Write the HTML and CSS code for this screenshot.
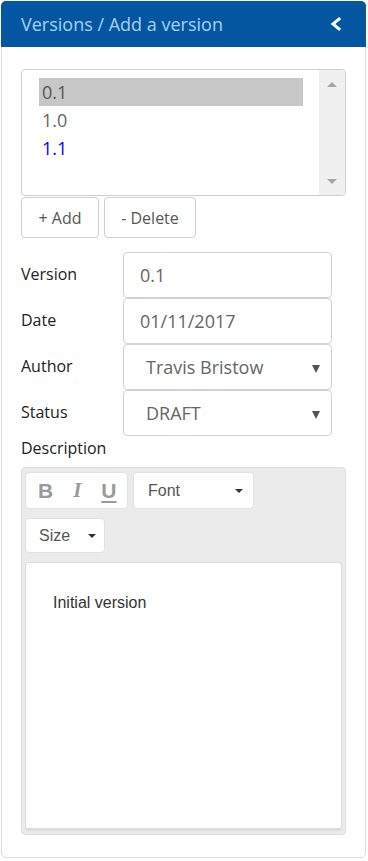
FILE: index.html
```html
<!DOCTYPE html>
<html lang="en">
<head>
    <meta charset="UTF-8">
    <meta name="viewport" content="width=device-width, initial-scale=1.0">
    <title>Versions / Add a version</title>
    <link rel="stylesheet" href="styles.css">
</head>
<body>
    <div class="panel">
        <div class="panel-header">
            <span class="panel-title">Versions / Add a version</span>
            <svg class="back-icon" width="12" height="14" viewBox="0 0 12 14">
                <polyline points="9,2 3,7 9,12" fill="none" stroke="#fff" stroke-width="3" stroke-linecap="square"/>
            </svg>
        </div>

        <div class="panel-body">
            <!-- version list -->
            <div class="version-list">
                <ul class="items">
                    <li class="item selected">0.1</li>
                    <li class="item">1.0</li>
                    <li class="item current">1.1</li>
                </ul>
                <div class="scrollbar">
                    <span class="arrow up"></span>
                    <span class="arrow down"></span>
                </div>
            </div>

            <div class="list-actions">
                <button class="btn btn-add">+ Add</button>
                <button class="btn btn-delete">- Delete</button>
            </div>

            <!-- version form -->
            <div class="form">
                <label>Version</label>
                <div class="field">0.1</div>
                <label>Date</label>
                <div class="field">01/11/2017</div>
                <label>Author</label>
                <div class="field select">Travis Bristow<span class="select-arrow"></span></div>
                <label>Status</label>
                <div class="field select">DRAFT<span class="select-arrow"></span></div>
            </div>

            <div class="desc-label">Description</div>

            <div class="editor">
                <div class="toolbar">
                    <div class="toolbar-row">
                        <div class="tool-group">
                            <span class="tool bold">B</span>
                            <span class="tool italic">I</span>
                            <span class="tool underline">U</span>
                        </div>
                        <div class="dropdown dd-font">Font<span class="caret"></span></div>
                    </div>
                    <div class="toolbar-row">
                        <div class="dropdown dd-size">Size<span class="caret"></span></div>
                    </div>
                </div>
                <div class="editor-content">
                    <p>Initial version</p>
                </div>
            </div>
        </div>
    </div>
</body>
</html>
```

FILE: styles.css
```css
* {
    margin: 0;
    padding: 0;
    box-sizing: border-box;
}
body {
    background: #fff;
    font-family: "Open Sans", sans-serif;
    color: #333;
}
.panel {
    margin: 1px 0 0 1px;
    width: 365px;
    height: 857px;
    border: 1px solid #dcdcdc;
    border-radius: 5px;
    display: flex;
    flex-direction: column;
}
.panel-header {
    height: 46px;
    margin: -1px -1px 0 -1px;
    background: #03569f;
    border-radius: 5px 5px 0 0;
    display: flex;
    align-items: center;
    justify-content: space-between;
    padding: 0 24px 0 20px;
}
.panel-title {
    color: #a3d2f8;
    font-size: 18px;
}
.panel-body {
    padding: 22px 19px 0 19px;
    flex: 1;
    display: flex;
    flex-direction: column;
}
.version-list {
    height: 127px;
    border: 1px solid #cfcfcf;
    border-radius: 4px;
    display: flex;
    overflow: hidden;
}
.items {
    list-style: none;
    flex: 1;
    padding: 8px 16px 0 17px;
}
.item {
    height: 28px;
    line-height: 28px;
    padding-left: 3px;
    font-size: 18px;
    color: #666;
}
.item.selected {
    background: #c7c7c7;
    color: #555;
}
.item.current {
    color: #0a00f0;
}
.scrollbar {
    width: 26px;
    background: #f0f0f0;
    display: flex;
    flex-direction: column;
    justify-content: space-between;
    align-items: center;
    padding: 12px 0 11px;
}
.arrow {
    width: 0;
    height: 0;
    border-left: 5px solid transparent;
    border-right: 5px solid transparent;
}
.arrow.up {
    border-bottom: 5px solid #a5a5a5;
}
.arrow.down {
    border-top: 5px solid #a5a5a5;
}
.list-actions {
    display: flex;
    gap: 5px;
    margin-top: 1px;
}
.btn {
    height: 41px;
    background: #fff;
    border: 1px solid #cfcfcf;
    border-radius: 4px;
    font-family: "Open Sans", sans-serif;
    font-size: 16px;
    color: #555;
}
.btn-add {
    width: 78px;
}
.btn-delete {
    width: 92px;
}
.form {
    margin-top: 14px;
    display: grid;
    grid-template-columns: 102px 209px;
    grid-auto-rows: 46px;
}
.form label {
    font-size: 16px;
    color: #222;
    display: flex;
    align-items: center;
    padding-bottom: 3px;
}
.field {
    border: 1px solid #d3d3d3;
    border-radius: 4px;
    display: flex;
    align-items: center;
    padding-left: 16px;
    font-size: 18px;
    color: #666;
    position: relative;
}
.field.select {
    padding-left: 22px;
}
.select-arrow {
    position: absolute;
    right: 11px;
    top: 20px;
    width: 0;
    height: 0;
    border-left: 4px solid transparent;
    border-right: 4px solid transparent;
    border-top: 8px solid #555;
}
.desc-label {
    font-size: 16px;
    color: #222;
    margin-top: 1px;
    height: 30px;
}
.editor {
    height: 368px;
    background: #ebebeb;
    border: 1px solid #dedede;
    border-radius: 4px;
    padding: 4px 3px 3px 3px;
    display: flex;
    flex-direction: column;
    font-family: "Liberation Sans", Arial, sans-serif;
}
.toolbar {
    display: flex;
    flex-direction: column;
    gap: 9px;
    margin-bottom: 9px;
}
.toolbar-row {
    display: flex;
    gap: 5px;
}
.tool-group {
    width: 103px;
    height: 37px;
    background: #fff;
    border-radius: 4px;
    border: 1px solid #e2e2e2;
    display: flex;
    align-items: center;
    padding-left: 12px;
    gap: 20px;
}
.tool {
    color: #9a9a9a;
    font-size: 21px;
    font-weight: bold;
}
.tool.italic {
    font-family: "Liberation Serif", serif;
    font-style: italic;
}
.tool.underline {
    text-decoration: underline;
    text-underline-offset: 3px;
    text-decoration-thickness: 2px;
}
.dropdown {
    height: 37px;
    background: #fff;
    border-radius: 4px;
    border: 1px solid #e2e2e2;
    display: flex;
    align-items: center;
    justify-content: space-between;
    font-size: 16px;
    color: #555;
}
.dd-font {
    width: 121px;
    padding: 0 10px 0 14px;
}
.dd-size {
    width: 80px;
    height: 35px;
    padding: 0 8px 0 13px;
}
.caret {
    width: 0;
    height: 0;
    border-left: 4px solid transparent;
    border-right: 4px solid transparent;
    border-top: 4px solid #333;
}
.editor-content {
    flex: 1;
    background: #fff;
    border: 1px solid #dcdcdc;
    border-bottom: 3px solid #dcdcdc;
    border-radius: 4px;
    padding: 31px 27px;
}
.editor-content p {
    font-size: 16px;
    color: #333;
}
```
